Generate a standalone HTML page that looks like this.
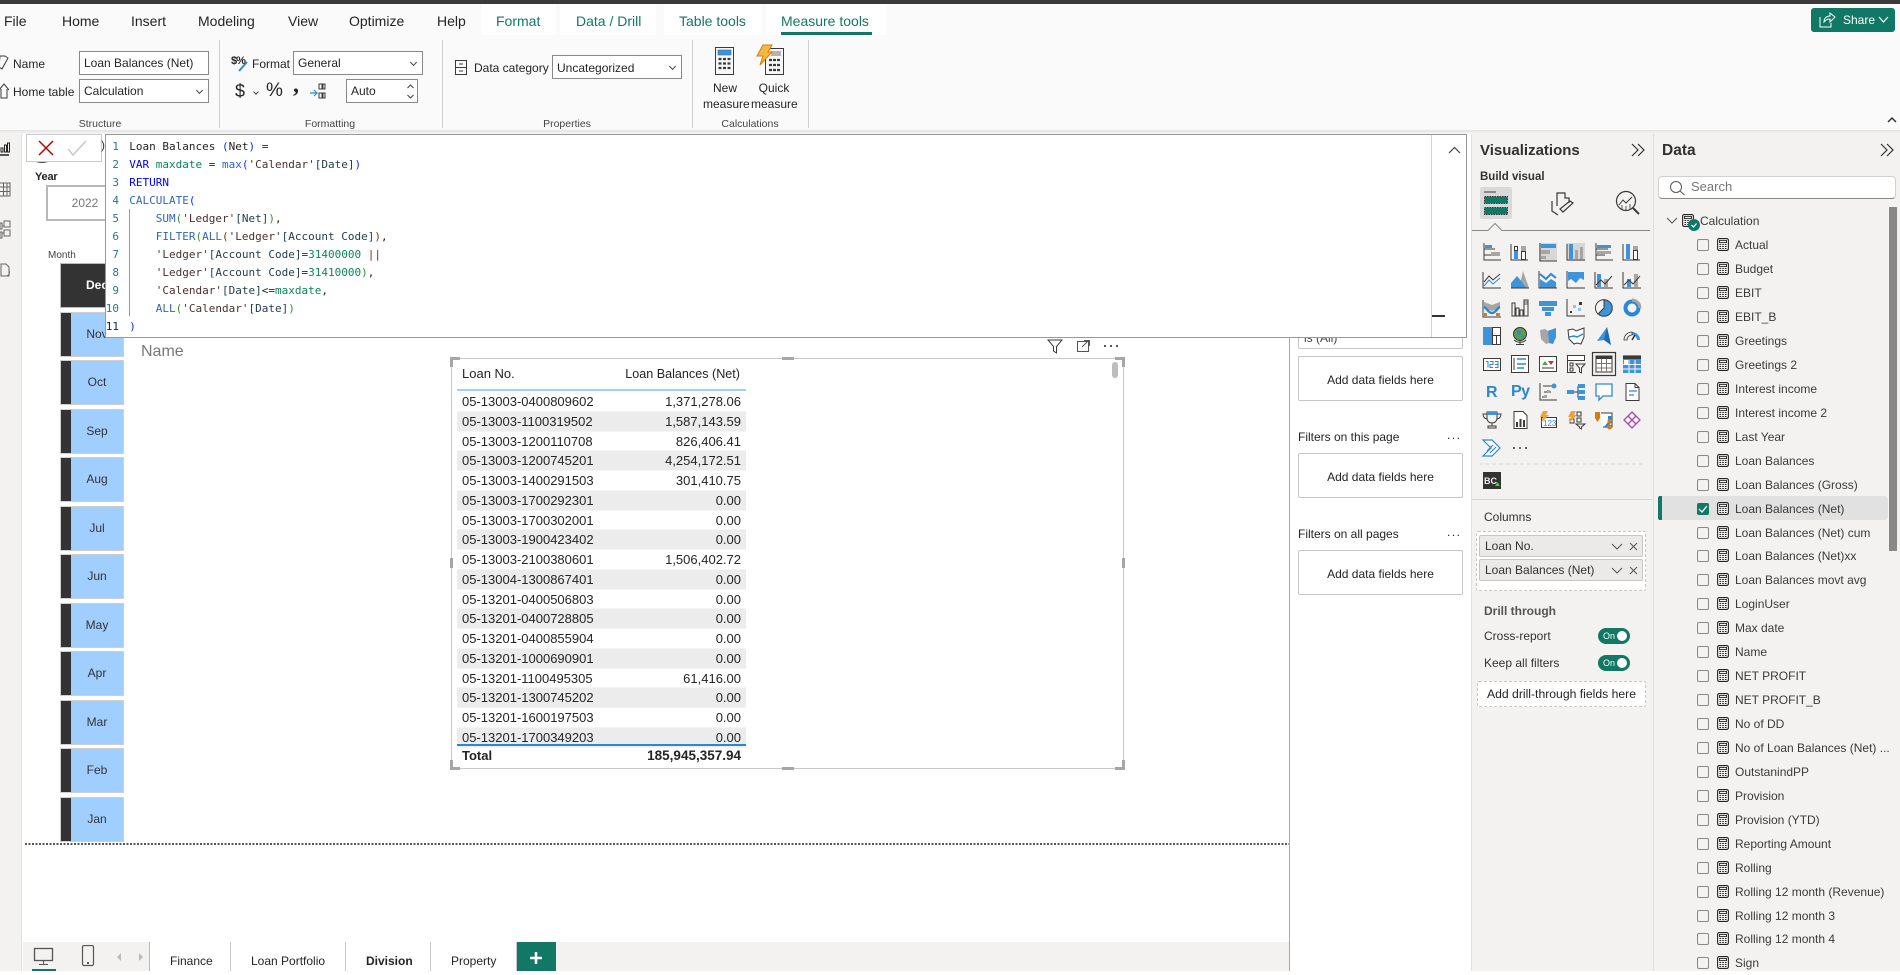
<!DOCTYPE html>
<html lang="en"><head><meta charset="utf-8"><title>Power BI Desktop</title>
<style>
html,body{margin:0;padding:0;width:1900px;height:971px;overflow:hidden;background:#fff;font-family:"Liberation Sans",sans-serif;color:#252423}
*{box-sizing:border-box}
.a,.t{position:absolute}
.t{white-space:nowrap;line-height:16px;height:16px;font-size:12px}
.tab{font-size:14px;top:13px}
.teal{color:#117865}
.sec{font-size:10.5px;color:#444;text-align:center;width:90px;top:116px}
.inp{position:absolute;background:#fff;border:1px solid #8a8886;font-size:12px;line-height:22px;padding-left:4px;white-space:nowrap}
.chev{position:absolute;width:5px;height:5px;border-right:1.2px solid #444;border-bottom:1.2px solid #444;transform:rotate(45deg)}
.div{position:absolute;top:40px;width:1px;height:88px;background:#d2d0ce}
.mono{font:11px/18px "DejaVu Sans Mono",monospace;position:absolute;white-space:pre;height:18px}
.k{color:#0000ff}.v{color:#098658}.f{color:#3165bb}.p1{color:#0431fa}.p2{color:#319331}.p3{color:#7b3814}.s1{color:#4a3030}.c1{color:#24404f}.n{color:#098658}.ln{color:#237893;width:16px;text-align:right;left:103px}
.m{position:absolute;left:60px;width:64px;height:45px;border:1px solid #cfcfcf;background:#a0cfff;font-size:12px;line-height:43px;text-align:center;color:#333;padding-left:10px}
.m:before{content:"";position:absolute;left:0;top:0;bottom:0;width:10px;background:#333}
.fb{position:absolute;left:1298px;width:165px;height:45px;background:#fff;border:1px solid #c8c6c4;border-radius:2px;text-align:center;font-size:12px;line-height:46px;color:#252423}
.tb{position:absolute;left:457px;top:392px;width:289px}
.tb div{height:19.76px;line-height:19.5px;font-size:13px;display:flex;justify-content:space-between;padding:0 5px;color:#252423;border-bottom:1px solid #f4f4f4}
.tb div:nth-child(even){background:#ececec}
.h{position:absolute;background:#a6a6a6}
.d{position:absolute;left:1658px;top:233.3px;width:231px}
.d div{position:relative;height:23.95px;line-height:24px;font-size:12px;padding-left:77px;color:#3b3a39;white-space:nowrap}
.d i{position:absolute;left:39px;top:6px;width:12px;height:12px;border:1px solid #8a8886;border-radius:2px;background:#f3f2f1}
.d svg{position:absolute;left:59px;top:5px;width:12px;height:13px}
.pill{position:absolute;left:1479px;width:164px;height:22px;background:#ebeae9;border:1px solid #c8c6c4;border-radius:2px;font-size:12px;line-height:20px;padding-left:5px;color:#323130}
.tg{position:absolute;left:1598px;width:32px;height:16px;border-radius:8px;background:#117865;color:#fff;font-size:9px;line-height:16px;padding-left:5px}
.tg:after{content:"";position:absolute;right:3px;top:3px;width:10px;height:10px;background:#fff;border-radius:50%}
.s{fill:none;stroke:#3b3a39;stroke-width:1}
.w{fill:#fff;stroke:#3b3a39;stroke-width:1}
.b{fill:#3f94d9}.g{fill:#a8a6a4}.o{fill:#e8a33d}.y{fill:#d87a16}
</style></head><body>
<svg width="0" height="0" style="position:absolute"><defs>
<symbol id="calc" viewBox="0 0 12 13"><rect x=".6" y=".6" width="10.8" height="11.8" rx="1.6" fill="#f3f2f1" stroke="#252423" stroke-width="1.1"/><rect x="2.5" y="2.4" width="7" height="2.2" fill="none" stroke="#252423" stroke-width=".9"/><path d="M2.5 6.5h1.6M5.2 6.5h1.6M7.9 6.5h1.6M2.5 8.5h1.6M5.2 8.5h1.6M7.9 8.5h1.6M2.5 10.5h1.6M5.2 10.5h1.6M7.9 10.5h1.6" stroke="#252423" stroke-width="1.1"/></symbol>
</defs></svg>

<!-- top -->
<div class="a" style="left:0;top:0;width:1900px;height:4px;background:#3b3a39"></div>
<div class="a" style="left:0;top:4px;width:1900px;height:126px;background:#fafafa"></div>
<div class="a" style="left:0;top:130px;width:1900px;height:4px;background:linear-gradient(#e2e2e2,#f6f6f6)"></div>
<div class="a" style="left:481px;top:4px;width:75px;height:31px;background:#fff"></div>
<div class="a" style="left:560px;top:4px;width:96px;height:31px;background:#fff"></div>
<div class="a" style="left:664px;top:4px;width:98px;height:31px;background:#fff"></div>
<div class="a" style="left:766px;top:4px;width:120px;height:31px;background:#fff"></div>
<div class="a" style="left:781px;top:32px;width:91px;height:3px;background:#117865"></div>
<div class="t tab" style="left:4px">File</div>
<div class="t tab" style="left:62px">Home</div>
<div class="t tab" style="left:131px">Insert</div>
<div class="t tab" style="left:198px">Modeling</div>
<div class="t tab" style="left:288px">View</div>
<div class="t tab" style="left:349px">Optimize</div>
<div class="t tab" style="left:437px">Help</div>
<div class="t tab teal" style="left:496px">Format</div>
<div class="t tab teal" style="left:576px">Data / Drill</div>
<div class="t tab teal" style="left:679px">Table tools</div>
<div class="t tab teal" style="left:781px">Measure tools</div>

<!-- ribbon: structure -->
<svg class="a" style="left:0;top:54px" width="12" height="46" viewBox="0 0 12 46"><path d="M0 2h5l3 2-6 11-3-2z" class="s"/><path d="M-1 36l5-6 5 6M1 35v9h6v-9" class="s"/></svg>
<div class="t" style="left:13px;top:56px">Name</div>
<div class="inp" style="left:79px;top:51px;width:130px;height:24px;line-height:23px">Loan Balances (Net)</div>
<div class="t" style="left:13px;top:84px">Home table</div>
<div class="inp" style="left:79px;top:79px;width:130px;height:24px;line-height:23px">Calculation<span class="chev" style="right:6px;top:8px"></span></div>
<div class="t sec" style="left:55px">Structure</div>
<div class="div" style="left:219px"></div>

<!-- formatting -->
<div class="t" style="left:231px;top:53px;font-size:11px;font-weight:bold;letter-spacing:-1px">$%</div>
<svg class="a" style="left:236px;top:60px" width="14" height="12"><path d="M3 11L11 2" stroke="#2b88d8" stroke-width="2"/></svg>
<div class="t" style="left:252px;top:56px">Format</div>
<div class="inp" style="left:293px;top:51px;width:130px;height:24px;line-height:23px">General<span class="chev" style="right:6px;top:8px"></span></div>
<div class="t" style="left:235px;top:83px;font-size:18px">$</div>
<span class="chev" style="left:254px;top:90px;width:4px;height:4px"></span>
<div class="t" style="left:266px;top:83px;font-size:19px">%</div>
<div class="t" style="left:293px;top:77px;font-size:24px;font-weight:bold;font-family:'Liberation Serif',serif">,</div>
<svg class="a" style="left:310px;top:83px" width="16" height="17"><path d="M9 1h3v5H9zM13 1h2v5h-2zM9 10h3v5H9zM13 10h2v5h-2z" class="s" stroke-width=".8"/><path d="M0 10h7M4 7l3 3-3 3" fill="none" stroke="#2b88d8" stroke-width="1.2"/></svg>
<div class="inp" style="left:346px;top:79px;width:72px;height:24px;line-height:23px">Auto</div>
<svg class="a" style="left:406px;top:84px" width="9" height="15"><path d="M1.5 4l3-3 3 3M1.5 11l3 3 3-3" fill="none" stroke="#444" stroke-width="1.1"/></svg>
<div class="t sec" style="left:285px">Formatting</div>
<div class="div" style="left:442px"></div>

<!-- properties -->
<svg class="a" style="left:455px;top:60px" width="13" height="16"><rect x=".5" y=".5" width="11" height="14" class="s"/><path d="M1 7.5h10M4 4h4M4 11h4" class="s"/></svg>
<div class="t" style="left:474px;top:60px">Data category</div>
<div class="inp" style="left:552px;top:55px;width:130px;height:24px;line-height:24px">Uncategorized<span class="chev" style="right:6px;top:8px"></span></div>
<div class="t sec" style="left:522px">Properties</div>
<div class="div" style="left:692px"></div>

<!-- calculations -->
<svg class="a" style="left:714px;top:46px" width="22" height="30"><rect x="1.5" y="1.5" width="18" height="27" fill="#f8f8f8" stroke="#3b3a39"/><rect x="4" y="4" width="13" height="5" fill="#3f94d9" stroke="#2b6fa8" stroke-width=".6"/><path d="M4.5 13h3M9 13h3M13.500 13h3M4.500 17.500h3M9 17.500h3M13.500 17.500h3M4.500 22h3M9 22h3M13.500 22h3" stroke="#3b3a39" stroke-width="2.200"/></svg>
<svg class="a" style="left:756px;top:44px" width="29" height="32"><rect x="9.500" y="4.500" width="18" height="26" fill="#f8f8f8" stroke="#3b3a39"/><rect x="15" y="7" width="10" height="5" fill="#b5b3b1"/><path d="M13 16h3M17 16h3M21 16h3M13 21h3M17 21h3M21 21h3M13 26h3M17 26h3M21 26h3" stroke="#3b3a39" stroke-width="2.200"/><path d="M7 1h9l-4 7h4L4 21l3-9H1z" fill="#f5b93d" stroke="#d87a16"/></svg>
<div class="t" style="left:713px;top:80px;width:24px;text-align:center">New</div>
<div class="t" style="left:703px;top:96px;width:44px;text-align:center">measure</div>
<div class="t" style="left:756px;top:80px;width:36px;text-align:center">Quick</div>
<div class="t" style="left:751px;top:96px;width:46px;text-align:center">measure</div>
<div class="t sec" style="left:705px">Calculations</div>
<div class="div" style="left:808px"></div>

<!-- share -->
<div class="a" style="left:1811px;top:8px;width:84px;height:24px;background:#117865;border-radius:3px"></div>
<svg class="a" style="left:1818px;top:11px" width="19" height="18"><path d="M2 6v10h11v-4" fill="none" stroke="#fff"/><path d="M6 11c0-4 3-6 6-6V2l5 4-5 5V8c-3 0-4 1-6 3z" fill="none" stroke="#fff"/></svg>
<div class="t" style="left:1843px;top:12px;color:#fff">Share</div>
<svg class="a" style="left:1878px;top:16px" width="11" height="8"><path d="M1 1l4.500 5L10 1" fill="none" stroke="#fff" stroke-width="1.100"/></svg>
<svg class="a" style="left:1887px;top:116px" width="10" height="7"><path d="M1 6l4-4 4 4" fill="none" stroke="#333" stroke-width="1.500"/></svg>

<!-- left rail -->
<div class="a" style="left:0;top:134px;width:22px;height:837px;background:#f3f2f1;border-right:1px solid #e1dfdd"></div>
<svg class="a" style="left:0;top:140px" width="22" height="145"><path d="M1 12v-4h2v4zM4.500 12V5h2v7zM7.500 12V3h2v9z" fill="none" stroke="#252423"/><path d="M0 15h9" stroke="#252423" stroke-width="1.500"/><path d="M0 43h10v13H0M0 47h10M0 51.500h10M3.500 43v13M7 43v13" fill="none" stroke="#666"/><path d="M0 83h2v6H0zM4 81h6v6H4zM4 90h6v6H4zM0 92h2v6H0zM2 86h2M2 93h2" fill="none" stroke="#666"/><path d="M1 124h5l3 3v9H1zM9 130c1 3 0 5-2 6" fill="none" stroke="#666"/></svg>

<!-- slicers -->
<div class="t" style="left:35px;top:169px;font-weight:bold;font-size:11px;letter-spacing:-.2px">Year</div>
<div class="a" style="left:46px;top:185px;width:70px;height:36px;border:2px solid #b8b8b8;background:#fff;font-size:12px;line-height:33px;text-align:center;color:#777;padding-left:8px">2022</div>
<svg class="a" style="left:31px;top:155px" width="22" height="10"><path d="M2 5c4 4 14 4 18 0z" fill="#555"/></svg>
<div class="t" style="left:48px;top:248px;font-size:10px;color:#444">Month</div>
<div class="m" style="top:263px;background:#333;color:#fff;font-weight:bold;border-color:#bbb">Dec</div>
<div class="m" style="top:311.500px">Nov</div>
<div class="m" style="top:360px">Oct</div>
<div class="m" style="top:408.500px">Sep</div>
<div class="m" style="top:457px">Aug</div>
<div class="m" style="top:505.500px">Jul</div>
<div class="m" style="top:554px">Jun</div>
<div class="m" style="top:602.500px">May</div>
<div class="m" style="top:651px">Apr</div>
<div class="m" style="top:699.500px">Mar</div>
<div class="m" style="top:748px">Feb</div>
<div class="m" style="top:796.500px">Jan</div>

<!-- dotted line -->
<div class="a" style="left:25px;top:843px;width:1264px;height:2px;background:repeating-linear-gradient(90deg,#555 0 2px,transparent 2px 3.500px)"></div>

<!-- visual -->
<div class="t" style="left:141px;top:343px;font-size:16px;line-height:18px;height:18px;color:#777">Name</div>
<svg class="a" style="left:1045px;top:338px" width="80" height="18"><path d="M3 2h14l-5.500 6.500V15l-3-2V8.500z" class="s"/><rect x="32.500" y="3.500" width="11" height="10" fill="none" stroke="#555"/><path d="M37 9l6-6M39 2.500h5.500V8" fill="none" stroke="#555"/><circle cx="60" cy="8" r="1.100" fill="#444"/><circle cx="66" cy="8" r="1.100" fill="#444"/><circle cx="72" cy="8" r="1.100" fill="#444"/></svg>
<div class="a" style="left:451px;top:358px;width:673px;height:411px;border:1px solid #c8c8c8;background:#fff"></div>
<div class="h" style="left:450px;top:357px;width:10px;height:3px"></div><div class="h" style="left:450px;top:357px;width:3px;height:10px"></div>
<div class="h" style="left:1115px;top:357px;width:10px;height:3px"></div><div class="h" style="left:1122px;top:357px;width:3px;height:10px"></div>
<div class="h" style="left:450px;top:767px;width:10px;height:3px"></div><div class="h" style="left:450px;top:760px;width:3px;height:10px"></div>
<div class="h" style="left:1115px;top:767px;width:10px;height:3px"></div><div class="h" style="left:1122px;top:760px;width:3px;height:10px"></div>
<div class="h" style="left:782px;top:357px;width:12px;height:3px"></div>
<div class="h" style="left:782px;top:767px;width:12px;height:3px"></div>
<div class="h" style="left:450px;top:558px;width:3px;height:10px"></div>
<div class="h" style="left:1122px;top:558px;width:3px;height:10px"></div>
<div class="a" style="left:1112px;top:362px;width:6px;height:16px;background:#bdbdbd;border-radius:3px"></div>
<div class="t" style="left:462px;top:366px;font-size:13px">Loan No.</div>
<div class="t" style="left:560px;width:180px;text-align:right;top:366px;font-size:12.6px">Loan Balances (Net)</div>
<div class="a" style="left:457px;top:389px;width:289px;height:2px;background:#9fcfff"></div>
<div class="tb">
<div><span>05-13003-0400809602</span><span>1,371,278.06</span></div>
<div><span>05-13003-1100319502</span><span>1,587,143.59</span></div>
<div><span>05-13003-1200110708</span><span>826,406.41</span></div>
<div><span>05-13003-1200745201</span><span>4,254,172.51</span></div>
<div><span>05-13003-1400291503</span><span>301,410.75</span></div>
<div><span>05-13003-1700292301</span><span>0.00</span></div>
<div><span>05-13003-1700302001</span><span>0.00</span></div>
<div><span>05-13003-1900423402</span><span>0.00</span></div>
<div><span>05-13003-2100380601</span><span>1,506,402.72</span></div>
<div><span>05-13004-1300867401</span><span>0.00</span></div>
<div><span>05-13201-0400506803</span><span>0.00</span></div>
<div><span>05-13201-0400728805</span><span>0.00</span></div>
<div><span>05-13201-0400855904</span><span>0.00</span></div>
<div><span>05-13201-1000690901</span><span>0.00</span></div>
<div><span>05-13201-1100495305</span><span>61,416.00</span></div>
<div><span>05-13201-1300745202</span><span>0.00</span></div>
<div><span>05-13201-1600197503</span><span>0.00</span></div>
<div><span>05-13201-1700349203</span><span>0.00</span></div>
</div>
<div class="a" style="left:457px;top:744px;width:289px;height:1.500px;background:#2b88d8"></div>
<div class="t" style="left:462px;top:748px;font-size:13px;font-weight:bold">Total</div>
<div class="t" style="left:560px;width:181px;text-align:right;top:748px;font-size:13.5px;font-weight:bold">185,945,357.94</div>

<!-- bottom tabs -->
<div class="a" style="left:23px;top:942px;width:1266px;height:29px;background:#f3f2f1"></div>
<div class="a" style="left:149px;top:942px;width:367px;height:29px;background:#fff"></div>
<svg class="a" style="left:30px;top:945px" width="120" height="26"><rect x="4.500" y="3.500" width="18" height="12" fill="none" stroke="#555" stroke-width="1.300"/><path d="M13.500 16v3M9 19.500h9" stroke="#555"/><rect x="2" y="24" width="24" height="2" fill="#117865"/><rect x="52.500" y=".5" width="11" height="20" rx="1.500" fill="none" stroke="#555" stroke-width="1.200"/><rect x="57" y="17" width="2" height="2" fill="#555"/><path d="M91 8l-4 4 4 4z" fill="#bbb"/><path d="M109 8l4 4-4 4z" fill="#bbb"/></svg>
<div class="a" style="left:149px;top:942px;width:1px;height:29px;background:#b9b9b9"></div>
<div class="a" style="left:230px;top:942px;width:1px;height:29px;background:#c8c8c8"></div>
<div class="a" style="left:345px;top:942px;width:1px;height:29px;background:#c8c8c8"></div>
<div class="a" style="left:430px;top:942px;width:1px;height:29px;background:#c8c8c8"></div>
<div class="a" style="left:516px;top:942px;width:1px;height:29px;background:#c8c8c8"></div>
<div class="t" style="left:170px;top:953px">Finance</div>
<div class="t" style="left:251px;top:953px">Loan Portfolio</div>
<div class="t" style="left:366px;top:953px;font-weight:bold">Division</div>
<div class="t" style="left:451px;top:953px">Property</div>
<div class="a" style="left:517px;top:942px;width:39px;height:29px;background:#117865"></div>
<svg class="a" style="left:530px;top:952px" width="12" height="12"><path d="M6 0v12M0 6h12" stroke="#fff" stroke-width="2.500"/></svg>

<!-- filter pane -->
<div class="a" style="left:1289px;top:134px;width:1px;height:837px;background:#a8a8a8"></div>
<div class="fb" style="top:304px"></div>
<div class="t" style="left:1304px;top:330px;color:#444">is (All)</div>
<div class="fb" style="top:356px">Add data fields here</div>
<div class="t" style="left:1298px;top:429px">Filters on this page</div>
<div class="t" style="left:1447px;top:427px;letter-spacing:1.500px">...</div>
<div class="fb" style="top:453px">Add data fields here</div>
<div class="t" style="left:1298px;top:526px">Filters on all pages</div>
<div class="t" style="left:1447px;top:524px;letter-spacing:1.500px">...</div>
<div class="fb" style="top:550px">Add data fields here</div>

<!-- formula bar -->
<div class="a" style="left:26px;top:134px;width:76px;height:28px;background:#fff;border:1px solid #ccc"></div>
<svg class="a" style="left:36px;top:138px" width="52" height="20"><path d="M3 3l14 14M17 3L3 17" stroke="#c00000" stroke-width="1.500"/><path d="M32 11l5 6L50 3" fill="none" stroke="#c8c8c8" stroke-width="1.500"/></svg>
<div class="t" style="left:101px;top:137px;color:#333">)</div>
<div class="a" style="left:105px;top:134px;width:1362px;height:204px;background:#fff;border:1px solid #999"></div>
<div class="a" style="left:1431px;top:135px;width:1px;height:202px;background:#d4d4d4"></div>
<svg class="a" style="left:1448px;top:146px" width="13" height="8"><path d="M1 7l5.500-5.500L12 7" fill="none" stroke="#444" stroke-width="1.200"/></svg>
<div class="a" style="left:1432px;top:315px;width:13px;height:1.500px;background:#333"></div>
<div class="a" style="left:129px;top:209px;width:1px;height:107px;background:#999"></div>
<div class="mono ln" style="top:138px">1</div>
<div class="mono ln" style="top:156px">2</div>
<div class="mono ln" style="top:174px">3</div>
<div class="mono ln" style="top:192px">4</div>
<div class="mono ln" style="top:210px">5</div>
<div class="mono ln" style="top:228px">6</div>
<div class="mono ln" style="top:246px">7</div>
<div class="mono ln" style="top:264px">8</div>
<div class="mono ln" style="top:282px">9</div>
<div class="mono ln" style="top:300px">10</div>
<div class="mono ln" style="top:318px;color:#0b216f">11</div>
<div class="mono" style="left:129.300px;top:138px">Loan Balances <span class="p1">(</span>Net<span class="p1">)</span> =</div>
<div class="mono" style="left:129.300px;top:156px"><span class="k">VAR</span> <span class="v">maxdate</span> = <span class="f">max</span><span class="p1">(</span><span class="s1">'Calendar'</span><span class="c1">[Date]</span><span class="p1">)</span></div>
<div class="mono" style="left:129.300px;top:174px"><span class="k">RETURN</span></div>
<div class="mono" style="left:129.300px;top:192px"><span class="f">CALCULATE</span><span class="p1">(</span></div>
<div class="mono" style="left:129.300px;top:210px">    <span class="f">SUM</span><span class="p2">(</span><span class="s1">'Ledger'</span><span class="c1">[Net]</span><span class="p2">)</span>,</div>
<div class="mono" style="left:129.300px;top:228px">    <span class="f">FILTER</span><span class="p2">(</span><span class="f">ALL</span><span class="p3">(</span><span class="s1">'Ledger'</span><span class="c1">[Account Code]</span><span class="p3">)</span>,</div>
<div class="mono" style="left:129.300px;top:246px">    <span class="s1">'Ledger'</span><span class="c1">[Account Code]</span>=<span class="n">31400000</span> <span style="color:#a31515">||</span></div>
<div class="mono" style="left:129.300px;top:264px">    <span class="s1">'Ledger'</span><span class="c1">[Account Code]</span>=<span class="n">31410000</span><span class="p2">)</span>,</div>
<div class="mono" style="left:129.300px;top:282px">    <span class="s1">'Calendar'</span><span class="c1">[Date]</span>&lt;=<span class="v">maxdate</span>,</div>
<div class="mono" style="left:129.300px;top:300px">    <span class="f">ALL</span><span class="p2">(</span><span class="s1">'Calendar'</span><span class="c1">[Date]</span><span class="p2">)</span></div>
<div class="mono" style="left:129.300px;top:318px"><span class="p1">)</span></div>

<!-- visualizations pane -->
<div class="a" style="left:1471px;top:134px;width:182px;height:837px;background:#f3f2f1;border-left:1px solid #e1dfdd"></div>
<div class="t" style="left:1480px;top:142px;font-size:15px;line-height:18px;height:18px;font-weight:bold;color:#323130">Visualizations</div>
<svg class="a" style="left:1631px;top:143px" width="15" height="14"><path d="M1 1l6 6-6 6M7 1l6 6-6 6" fill="none" stroke="#323130" stroke-width="1.200"/></svg>
<div class="t" style="left:1480px;top:168.500px;font-weight:bold;font-size:11.500px;color:#323130">Build visual</div>
<div class="a" style="left:1480px;top:187px;width:32px;height:32px;background:#d9d9d9;border-radius:2px"></div>
<svg class="a" style="left:1472px;top:187px" width="180" height="46">
<path d="M12 5h12" stroke="#3b3a39"/>
<rect x="12.500" y="9.500" width="23" height="7" fill="#117865" stroke="#3b3a39" stroke-dasharray="1.500 1"/>
<rect x="12.500" y="20.500" width="23" height="7" fill="#117865" stroke="#3b3a39" stroke-dasharray="1.500 1"/>
<path d="M0 43.500h16l7-7 7 7h148" fill="none" stroke="#8a8886"/>
<path d="M85 19V6h8v5h4v5M80 14v10l6 4M88 22l10-8 3 2-10 9z" fill="none" stroke="#3b3a39" stroke-width="1.200"/>
<circle cx="154" cy="14" r="9.500" fill="none" stroke="#3b3a39" stroke-width="1.200"/><path d="M147 18l4-5 3 3 6-6" fill="none" stroke="#3b3a39"/><path d="M150 18v4M154 19v4M158 17v5" stroke="#3b3a39" stroke-width=".8"/><path d="M161 21l6 6" stroke="#3b3a39" stroke-width="2"/>
</svg>
<svg class="a" style="left:1480px;top:240px" width="170" height="255">
<!-- row 1 -->
<g transform="translate(3,3)"><path class="s" d="M1 0v17h17M1 6h11M1 12h7"/><rect class="b" x="2" y="2" width="7" height="3"/><rect class="g" x="8" y="9" width="9" height="4"/></g>
<g transform="translate(31,3)"><path class="s" d="M0 1v16h17"/><rect class="b" x="3" y="8" width="4" height="8"/><rect class="g" x="10" y="3" width="5" height="5"/><rect class="w" x="10.500" y="8.500" width="4" height="8"/><rect class="w" x="3.500" y="3.500" width="3" height="4"/></g>
<g transform="translate(59,3)"><rect class="g" x="0" y="0" width="18" height="18" opacity=".35"/><path class="s" d="M1 0v18h17"/><rect class="b" x="2" y="1" width="15" height="4"/><rect class="g" x="2" y="7" width="9" height="4"/><rect class="g" x="2" y="13" width="5" height="3"/></g>
<g transform="translate(87,3)"><rect class="g" x="0" y="0" width="18" height="18" opacity=".35"/><path class="s" d="M0 1v16h18"/><rect class="b" x="2" y="1" width="4" height="15"/><rect class="g" x="8" y="7" width="3" height="9"/><rect class="g" x="13" y="4" width="3" height="12"/></g>
<g transform="translate(115,3)"><path class="s" d="M1 0v17h17M1 6h12M1 12h9"/><rect class="b" x="2" y="2" width="14" height="3"/><rect class="g" x="2" y="8" width="14" height="3"/></g>
<g transform="translate(143,3)"><path class="s" d="M0 1v16h17"/><rect class="b" x="3" y="1" width="4" height="15"/><rect class="g" x="10" y="3" width="5" height="4"/><rect class="w" x="10.500" y="7.500" width="4" height="9"/></g>
<!-- row 2 -->
<g transform="translate(3,31)"><path class="s" d="M0 1v16h18"/><path d="M1 11l5-6 4 4 7-6" fill="none" stroke="#3b3a39"/><path d="M1 15l5-6 4 4 7-6" fill="none" stroke="#2b88d8"/></g>
<g transform="translate(31,31)"><path class="g" d="M8 17l4-17 6 17z"/><path class="b" d="M0 17v-5l6-7 5 6 4 6z"/><path class="s" d="M0 17h18"/></g>
<g transform="translate(59,31)"><path class="b" d="M1 8l6 4 5-4 5 3v6H1z"/><path d="M1 3l6 5 5-5 5 4" fill="none" stroke="#2b88d8" stroke-width="2"/><path class="s" d="M0 0v17h18"/></g>
<g transform="translate(87,31)"><path class="b" d="M1 1h16v8l-4-2-4 5-5-4-3 2z"/><path class="s" d="M0 0v17h18"/></g>
<g transform="translate(115,31)"><path class="s" d="M0 1v16h18"/><rect class="b" x="2" y="3" width="4" height="13"/><rect class="g" x="9" y="8" width="4" height="8"/><path d="M1 14l5-5 4 4 7-8" fill="none" stroke="#3b3a39"/></g>
<g transform="translate(143,31)"><path class="s" d="M0 1v16h18"/><rect class="b" x="4" y="8" width="4" height="8"/><rect class="g" x="11" y="3" width="4" height="13"/><path d="M1 14l5-5 4 4 7-8" fill="none" stroke="#3b3a39"/></g>
<!-- row 3 -->
<g transform="translate(3,59)"><path class="g" d="M1 3l8 3 8-3v6l-8 3-8-3z"/><path d="M1 8c3 1 4 6 8 6s5-5 8-6" fill="none" stroke="#2b88d8" stroke-width="2.500"/><path d="M1 14h3v3H1zM13 14h4v3h-4z" class="y"/><path class="s" d="M0 1v17h18"/></g>
<g transform="translate(31,59)"><path class="s" d="M1 17V4h3v13zM5 17V9h3v8zM9 17v-6h3v6zM13 17V1h4v16z"/><path class="g" d="M13.500 2h3v4h-3z"/></g>
<g transform="translate(59,59)"><rect class="b" x="0" y="2" width="18" height="5"/><rect class="b" x="3" y="8" width="12" height="4"/><rect class="b" x="6" y="13" width="6" height="4"/></g>
<g transform="translate(87,59)"><path class="s" d="M0 0v17h18"/><rect x="12" y="3" width="3" height="3" fill="#3b3a39"/><rect x="6" y="6" width="3" height="3" fill="#8ec4ee"/><rect x="11" y="9" width="3" height="3" fill="#8ec4ee"/><rect x="3" y="12" width="2" height="2" fill="#3b3a39"/></g>
<g transform="translate(115,59)"><circle cx="9" cy="9" r="8.300" class="b" stroke="#3b3a39"/><path d="M9 9V.7A8.300 8.300 0 0 0 3 15z" fill="#f3f2f1" stroke="#3b3a39"/></g>
<g transform="translate(143,59)"><circle cx="9" cy="9" r="6.500" fill="none" stroke="#2b88d8" stroke-width="4"/><path d="M9 1a8 8 0 0 1 8 8" fill="none" stroke="#a8a6a4" stroke-width="3"/></g>
<!-- row 4 -->
<g transform="translate(3,87)"><rect class="b" x="0" y="0" width="9" height="18"/><rect class="w" x="9.500" y=".5" width="8" height="8"/><rect class="w" x="9.500" y="8.500" width="4" height="9"/><rect class="w" x="13.500" y="8.500" width="4" height="9"/></g>
<g transform="translate(31,87)"><circle cx="9" cy="7" r="6.500" fill="#5a9e52" stroke="#333"/><path d="M6 3l4 1-1 4-3-1zM10 9l3-1v3z" fill="#2b88d8"/><path d="M3 13c3 3 9 3 12 0M9 14v3M5 17.500h8" class="s"/></g>
<g transform="translate(59,87)"><path class="g" d="M1 3l5-1 3 2 8-3v9l-3 7-4-1-3 1-5-5z"/><path class="b" d="M9 4l8-3v9l-3 7-4-1z"/></g>
<g transform="translate(87,87)"><path d="M1 3l5-1 3 2 8-3v9l-3 7-4-1-3 1-5-5z" fill="#fff" stroke="#3b3a39"/><path d="M2 10l5-1 3 1 6-3" fill="none" stroke="#2b88d8" stroke-width="1.500"/></g>
<g transform="translate(115,87)"><path d="M12 0l4 18-7-5-7 1z" fill="#3f94d9"/><path d="M12 0l4 18-7-5z" fill="#1b6cb0"/></g>
<g transform="translate(143,87)"><path d="M1 13a8 8 0 0 1 16 0h-3a5 5 0 0 0-10 0z" class="b"/><path d="M1 13a8 8 0 0 1 8-8v3a5 5 0 0 0-5 5z" fill="#f3f2f1" stroke="#3b3a39" stroke-width=".8"/><path d="M9 13l3-5" stroke="#333" stroke-width="1.500"/></g>
<!-- row 5 -->
<g transform="translate(3,115)"><rect x=".5" y="3.500" width="17" height="12" fill="#fff" stroke="#3b3a39"/><path d="M3 6.500h2v6M7 6.500h3v3H7v3h3M12 6.500h3v6h-3M12 9.500h3" fill="none" stroke="#2b88d8"/></g>
<g transform="translate(31,115)"><rect x=".5" y=".5" width="17" height="17" class="w"/><path d="M3 3v12" stroke="#3b3a39"/><path d="M6 4h9M6 9h9M6 13h7" stroke="#2b88d8" stroke-width="1.500"/></g>
<g transform="translate(59,115)"><rect x=".5" y="1.500" width="17" height="15" class="w"/><path d="M3 10l3-4 3 4z" fill="#5a9e52"/><path d="M9 6h6l-3 4z" fill="#c0392b"/><path d="M3 13h12" stroke="#3b3a39"/></g>
<g transform="translate(87,115)"><path class="w" d="M.5.500h17v5H.5zM.5 5.500v12H9"/><rect class="s" x="3" y="8" width="3" height="3"/><rect class="s" x="3" y="13" width="3" height="3"/><path class="s" d="M9 9h9l-3.500 4v5l-2-1v-4z"/></g>
<g transform="translate(115,115)"><rect x="-2.500" y="-2.500" width="23" height="23" fill="none" stroke="#3b3a39" stroke-width="1.200"/><rect x="1" y="1" width="16" height="16" fill="#fff" stroke="#3b3a39"/><rect x="1" y="1" width="16" height="3" fill="#3b3a39"/><path d="M1 8.500h16M1 13h16M6.500 4v13M11.500 4v13" stroke="#777"/></g>
<g transform="translate(143,115)"><rect x="0" y="0" width="18" height="18" class="b"/><rect x="0" y="1" width="18" height="3" fill="#3b3a39"/><path d="M6 5v13M12 5v13M0 9.500h18M0 14h18" stroke="#fff"/><rect x="1" y="5" width="4" height="4" fill="#fff"/></g>
<!-- row 6 -->
<text x="6" y="157" font-family="Liberation Sans" font-size="16" font-weight="bold" fill="#2f86c9">R</text>
<text x="31" y="156" font-family="Liberation Sans" font-size="16" font-weight="bold" fill="#2f86c9" letter-spacing="-.5">Py</text>
<g transform="translate(59,143)"><path class="s" d="M1 0v17h17M4 3h10M5 9h7M3 14h5"/><circle cx="15" cy="3" r="2.500" class="b"/><rect x="5" y="12" width="3" height="3" fill="#a8a6a4"/><rect x="8" y="7" width="3" height="3" fill="#a8a6a4"/></g>
<g transform="translate(87,143)"><path class="s" d="M7 9h4M11 3v12"/><rect class="b" x="0" y="7" width="7" height="4"/><rect class="b" x="11" y="1" width="7" height="4"/><rect class="b" x="11" y="7" width="7" height="4"/><rect class="b" x="11" y="13" width="7" height="4"/></g>
<g transform="translate(115,143)"><path d="M1 1h16v12H8l-4 4v-4H1z" fill="#fff" stroke="#2b88d8" stroke-width="1.300"/></g>
<g transform="translate(143,143)"><path class="w" d="M3 .5h9l4 4v13H3z"/><path d="M6 8h8M6 12h5" stroke="#2b88d8" stroke-width="1.300"/><path d="M12 .5v4h4" class="s"/></g>
<!-- row 7 -->
<g transform="translate(3,171)"><path class="s" d="M4 1h10v6c0 3-2 5-5 5s-5-2-5-5zM4 3H0c0 3 2 5 4 5M14 3h4c0 3-2 5-4 5M9 12v3M5 17h8v-2H5z"/><rect class="b" x="4" y="1" width="10" height="3"/></g>
<g transform="translate(31,171)"><path class="w" d="M3 .5h9l4 4v13H3z"/><path d="M6 16v-5M9.500 16V8M13 16v-7" stroke="#3b3a39" stroke-width="2"/></g>
<g transform="translate(59,171)"><rect x="2.500" y="6.500" width="15" height="10" class="w"/><text x="4" y="15" font-family="Liberation Sans" font-size="8" fill="#2b88d8">123</text><path class="o" d="M4 0h5L7 4h3L2 12l2-6H1z"/></g>
<g transform="translate(87,171)"><path class="s" d="M10 1h4v4h-4zM10 7h4v4h-4zM3 8h4v4H3zM9 13h9l-3.500 3v2l-2-1v-1z"/><path class="o" d="M4 0h5L7 4h3L2 12l2-6H1z"/></g>
<g transform="translate(115,171)"><path d="M6 2h11v14H8" fill="#fff" stroke="#3b3a39"/><path d="M9 16l4-5V5h4v6l-5 5z" fill="#2b88d8"/><path class="y" d="M0 1h5v6l-2.500 4L0 7z"/><circle class="y" cx="14.500" cy="16" r="2.500"/><circle class="y" cx="14.500" cy="10" r="2"/></g>
<g transform="translate(143,171)"><path d="M9 1l8 8-8 8-8-8z" fill="none" stroke="#a04bb0" stroke-width="1.300"/><path d="M5 5l8 8M13 5l-8 8" stroke="#a04bb0" stroke-width="1.300"/></g>
<!-- row 8 -->
<g transform="translate(3,199)"><path d="M0 1h9l8 8-8 8H0l8-8z" fill="#fff" stroke="#2b88d8" stroke-width="1.200"/><path d="M4 12l6-6M7 14l6-6" stroke="#2b88d8" stroke-width="1.200"/></g>
<circle cx="34" cy="208" r="1" fill="#3b3a39"/><circle cx="40" cy="208" r="1" fill="#3b3a39"/><circle cx="46" cy="208" r="1" fill="#3b3a39"/>
<!-- BC -->
<path d="M-2 224h168" stroke="#d8d6d4" stroke-dasharray="4 3"/>
<rect x="3" y="232" width="18" height="17" fill="#333"/>
<text x="4" y="244" font-family="Liberation Sans" font-size="9" font-weight="bold" fill="#eee">BC</text><path d="M15 246l2.500-4 2.500 4z" fill="#3ed33e"/>
</svg>
<div class="a" style="left:1472px;top:499px;width:180px;height:1px;background:#d8d6d4"></div>
<div class="t" style="left:1484px;top:509px;color:#323130">Columns</div>
<div class="a" style="left:1476px;top:531px;width:170px;height:60px;background:#fff;border:1px dashed #c8c6c4;border-radius:2px"></div>
<div class="pill" style="top:535px">Loan No.</div>
<div class="pill" style="top:559px">Loan Balances (Net)</div>
<svg class="a" style="left:1611px;top:540px" width="32" height="36"><path d="M1 4l5 5 5-5M19 3l7 7M26 3l-7 7M1 28l5 5 5-5M19 27l7 7M26 27l-7 7" fill="none" stroke="#555"/></svg>
<div class="t" style="left:1484px;top:603px;font-weight:bold;color:#555">Drill through</div>
<div class="t" style="left:1484px;top:628px;color:#323130">Cross-report</div>
<div class="tg" style="top:628px">On</div>
<div class="t" style="left:1484px;top:655px;color:#323130">Keep all filters</div>
<div class="tg" style="top:655px">On</div>
<div class="a" style="left:1477px;top:681px;width:169px;height:26px;background:#fff;border:1px dashed #c8c6c4;border-radius:2px;font-size:12.2px;line-height:24px;text-align:center">Add drill-through fields here</div>

<!-- data pane -->
<div class="a" style="left:1653px;top:134px;width:247px;height:837px;background:#f3f2f1;border-left:1px solid #e1dfdd"></div>
<div class="t" style="left:1662px;top:142px;font-size:15.5px;line-height:18px;height:18px;font-weight:bold;color:#323130">Data</div>
<svg class="a" style="left:1880px;top:143px" width="15" height="14"><path d="M1 1l6 6-6 6M7 1l6 6-6 6" fill="none" stroke="#323130" stroke-width="1.200"/></svg>
<div class="a" style="left:1658px;top:176px;width:238px;height:23px;background:#fff;border:1px solid #d2d0ce;border-bottom:1px solid #8a8886;border-radius:4px"></div>
<svg class="a" style="left:1669px;top:180px" width="17" height="16"><circle cx="7" cy="7" r="5.500" fill="none" stroke="#555"/><path d="M11 11l4.500 4" stroke="#555"/></svg>
<div class="t" style="left:1691px;top:179px;font-size:13px;color:#767676">Search</div>
<svg class="a" style="left:1666px;top:213px" width="36" height="20"><path d="M1 5l5 5 5-5" fill="none" stroke="#555"/><use href="#calc" x="16" y="1" width="12" height="13"/><circle cx="28" cy="12" r="6" fill="#117865"/><path d="M25.500 12l2 2 3-3.500" fill="none" stroke="#fff" stroke-width="1.200"/></svg>
<div class="t" style="left:1700px;top:213px;color:#3b3a39">Calculation</div>
<div class="a" style="left:1889px;top:207px;width:8px;height:344px;background:#8a8886"></div>
<div class="a" style="left:1658px;top:495.500px;width:230px;height:24px;background:#e1e1e1;border-radius:4px"></div>
<div class="a" style="left:1658px;top:495.500px;width:4px;height:24px;background:#117865;border-radius:2px 0 0 2px"></div>
<div class="d">
<div><i></i><svg><use href="#calc"/></svg>Actual</div>
<div><i></i><svg><use href="#calc"/></svg>Budget</div>
<div><i></i><svg><use href="#calc"/></svg>EBIT</div>
<div><i></i><svg><use href="#calc"/></svg>EBIT_B</div>
<div><i></i><svg><use href="#calc"/></svg>Greetings</div>
<div><i></i><svg><use href="#calc"/></svg>Greetings 2</div>
<div><i></i><svg><use href="#calc"/></svg>Interest income</div>
<div><i></i><svg><use href="#calc"/></svg>Interest income 2</div>
<div><i></i><svg><use href="#calc"/></svg>Last Year</div>
<div><i></i><svg><use href="#calc"/></svg>Loan Balances</div>
<div><i></i><svg><use href="#calc"/></svg>Loan Balances (Gross)</div>
<div><i style="background:#117865;border-color:#117865"></i><svg style="left:40px;top:7px;width:10px;height:10px" viewBox="0 0 10 10"><path d="M1 5l3 3 5-6" fill="none" stroke="#fff" stroke-width="1.300"/></svg><svg><use href="#calc"/></svg>Loan Balances (Net)</div>
<div><i></i><svg><use href="#calc"/></svg>Loan Balances (Net) cum</div>
<div><i></i><svg><use href="#calc"/></svg>Loan Balances (Net)xx</div>
<div><i></i><svg><use href="#calc"/></svg>Loan Balances movt avg</div>
<div><i></i><svg><use href="#calc"/></svg>LoginUser</div>
<div><i></i><svg><use href="#calc"/></svg>Max date</div>
<div><i></i><svg><use href="#calc"/></svg>Name</div>
<div><i></i><svg><use href="#calc"/></svg>NET PROFIT</div>
<div><i></i><svg><use href="#calc"/></svg>NET PROFIT_B</div>
<div><i></i><svg><use href="#calc"/></svg>No of DD</div>
<div><i></i><svg><use href="#calc"/></svg>No of Loan Balances (Net) ...</div>
<div><i></i><svg><use href="#calc"/></svg>OutstanindPP</div>
<div><i></i><svg><use href="#calc"/></svg>Provision</div>
<div><i></i><svg><use href="#calc"/></svg>Provision (YTD)</div>
<div><i></i><svg><use href="#calc"/></svg>Reporting Amount</div>
<div><i></i><svg><use href="#calc"/></svg>Rolling</div>
<div><i></i><svg><use href="#calc"/></svg>Rolling 12 month (Revenue)</div>
<div><i></i><svg><use href="#calc"/></svg>Rolling 12 month 3</div>
<div><i></i><svg><use href="#calc"/></svg>Rolling 12 month 4</div>
<div><i></i><svg><use href="#calc"/></svg>Sign</div>
</div>
</body></html>
